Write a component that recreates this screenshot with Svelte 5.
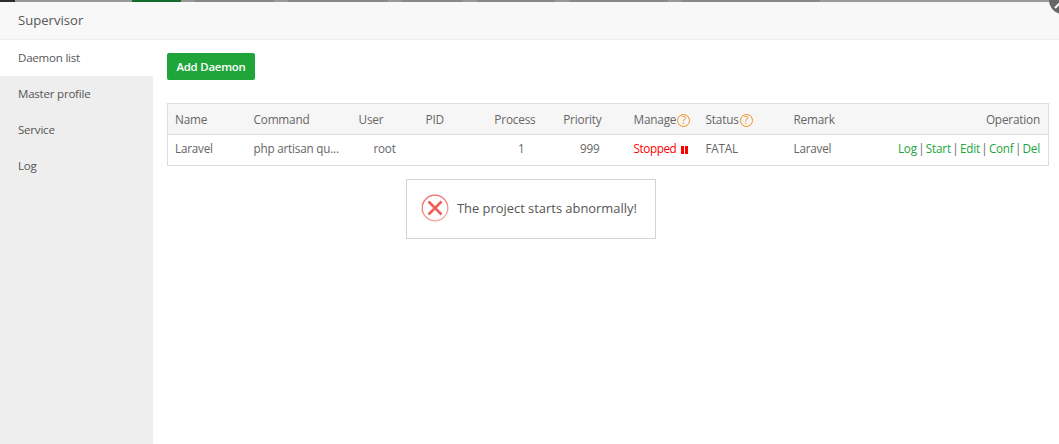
<script>
	const strip = [
		[15, '#2b2b2b'], [117, '#999'], [49, '#146c2c'], [14, '#999'], [79, '#888'], [14, '#999'],
		[100, '#888'], [13, '#999'], [62, '#888'], [14, '#999'], [78, '#888'], [14, '#999'],
		[99, '#888'], [13, '#999'], [139, '#888'], [239, '#9a9a9a']
	];
	const menu = ['Daemon list', 'Master profile', 'Service', 'Log'];
	const ops = ['Log', 'Start', 'Edit', 'Conf', 'Del'];
</script>

<div class="strip">
	{#each strip as [w, c]}
		<span style="width:{w}px;background:{c}"></span>
	{/each}
</div>
<div class="close">
	<svg width="20" height="20" viewBox="0 0 20 20"><path d="M2 18L18 2M2 2l16 16" stroke="#fff" stroke-width="2" /></svg>
</div>

<div class="window">
	<header>Supervisor</header>
	<div class="body">
		<nav>
			{#each menu as item, i}
				<div class="item" class:active={i === 0}>{item}</div>
			{/each}
		</nav>
		<main>
			<button>Add Daemon</button>
			<table>
				<colgroup>
					<col style="width:79px" /><col style="width:105px" /><col style="width:67px" /><col style="width:47px" />
					<col style="width:78px" /><col style="width:83px" /><col style="width:72px" /><col style="width:88px" />
					<col style="width:90px" /><col />
				</colgroup>
				<thead>
					<tr>
						<th>Name</th>
						<th>Command</th>
						<th>User</th>
						<th>PID</th>
						<th class="right">Process</th>
						<th class="right wide">Priority</th>
						<th>Manage<span class="help">?</span></th>
						<th>Status<span class="help">?</span></th>
						<th>Remark</th>
						<th class="right">Operation</th>
					</tr>
				</thead>
				<tbody>
					<tr>
						<td>Laravel</td>
						<td>php artisan qu...</td>
						<td class="center">root</td>
						<td></td>
						<td class="right one">1</td>
						<td class="right nine">999</td>
						<td class="stopped">Stopped<span class="pause"></span></td>
						<td>FATAL</td>
						<td>Laravel</td>
						<td class="right ops">
							{#each ops as op, i}
								<a href="#top">{op}</a>{#if i < ops.length - 1}<i>|</i>{/if}
							{/each}
						</td>
					</tr>
				</tbody>
			</table>
		</main>
	</div>
</div>

<div class="toast">
	<svg width="28" height="28" viewBox="0 0 28 28" fill="none">
		<defs>
			<linearGradient id="ring" x1="0.2" y1="0" x2="0.6" y2="1">
				<stop offset="0" stop-color="#ec6259" />
				<stop offset="1" stop-color="#f6aaa4" />
			</linearGradient>
		</defs>
		<circle cx="14" cy="14" r="12.8" stroke="url(#ring)" stroke-width="1.3" />
		<path d="M7.5 7.5l13 13M20.5 7.5l-13 13" stroke="#ee5f56" stroke-width="2.6" />
	</svg>
	<span>The project starts abnormally!</span>
</div>

<style>
	:global(body) {
		margin: 0;
		background: #fff;
		font-family: "Open Sans", "Noto Sans", sans-serif;
		font-size: 12px;
		color: #666;
		overflow: hidden;
	}
	.strip {
		display: flex;
		height: 2px;
	}
	.strip span {
		display: block;
		flex: none;
	}
	.close {
		position: absolute;
		top: -14px;
		right: -18px;
		width: 28px;
		height: 28px;
		border-radius: 50%;
		background: #666;
		display: flex;
		align-items: center;
		justify-content: center;
	}
	header {
		height: 37px;
		line-height: 37px;
		padding-left: 18px;
		background: #f8f8f8;
		border-bottom: 1px solid #eee;
		font-size: 13.1px;
		color: #555;
	}
	.body {
		display: flex;
		height: 404px;
	}
	nav {
		width: 153px;
		flex: none;
		background: #eee;
	}
	.item {
		height: 36px;
		line-height: 36px;
		padding-left: 18px;
		font-size: 11.5px;
		letter-spacing: -0.2px;
		color: #555;
	}
	.item.active {
		background: #fff;
	}
	main {
		flex: 1;
		padding: 13px 10px 0 14px;
	}
	button {
		display: block;
		width: 88px;
		height: 27px;
		padding: 0;
		border: 0;
		border-radius: 2px;
		background: #20a53a;
		color: #fff;
		font: 600 11.4px "Open Sans", sans-serif;
		letter-spacing: -0.2px;
	}
	table {
		width: 882px;
		margin-top: 23px;
		table-layout: fixed;
		border-collapse: collapse;
		border: 1px solid #ddd;
	}
	th,
	td {
		height: 30px;
		padding: 0 8px 0 7px;
		text-align: left;
		font-weight: 400;
		white-space: nowrap;
		overflow: hidden;
	}
	th {
		font-size: 11.8px;
		letter-spacing: -0.2px;
	}
	td {
		padding-bottom: 4px;
		height: 26px;
		font-size: 11.7px;
		letter-spacing: -0.2px;
	}
	thead tr {
		background: #f6f6f6;
		border-bottom: 1px solid #ddd;
	}
	.right {
		text-align: right;
	}
	.center {
		text-align: center;
	}
	.wide {
		padding-right: 25px;
	}
	.one {
		padding-right: 19px;
	}
	.nine {
		padding-right: 27px;
	}
	.help {
		display: inline-block;
		box-sizing: border-box;
		width: 13px;
		height: 13px;
		margin-left: 1px;
		border: 1px solid #f39021;
		border-radius: 50%;
		color: #f39021;
		font-size: 10px;
		line-height: 11px;
		letter-spacing: 0;
		text-align: center;
		vertical-align: 0;
	}
	.stopped {
		color: #f00;
		letter-spacing: -0.4px;
	}
	.pause {
		display: inline-block;
		box-sizing: border-box;
		width: 7px;
		height: 8px;
		margin-left: 5px;
		border-left: 3px solid #f00;
		border-right: 3px solid #f00;
		vertical-align: -1px;
	}
	.ops a {
		color: #20a53a;
		text-decoration: none;
	}
	.ops i {
		font-style: normal;
		color: #666;
		margin: 0 1.4px;
	}
	.toast {
		position: absolute;
		left: 406px;
		top: 179px;
		box-sizing: border-box;
		width: 250px;
		height: 60px;
		display: flex;
		align-items: center;
		gap: 8px;
		padding: 0 0 2px 14px;
		background: #fff;
		border: 1px solid #d3d3d3;
		font-size: 12.9px;
		color: #555;
	}
</style>
